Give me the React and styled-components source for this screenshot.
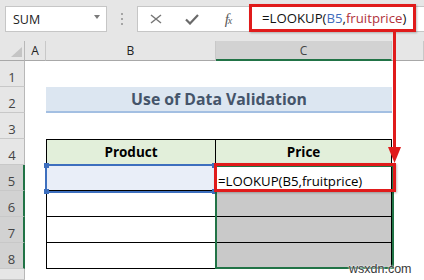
import React from 'react';
import styled, { createGlobalStyle } from 'styled-components';

const GlobalStyle = createGlobalStyle`
  html, body {
    margin: 0;
    padding: 0;
    background: #fff;
  }
  body {
    font-family: "Open Sans", "Liberation Sans", sans-serif;
  }
`;

const Screen = styled.div`
  position: relative;
  width: 424px;
  height: 280px;
  overflow: hidden;
  background: #fff;
`;

// ---- formula bar ----
const Toolbar = styled.div`
  display: flex;
  align-items: flex-start;
  height: 41px;
  box-sizing: border-box;
  padding: 6px 0 0 5px;
  background: #e6e6e6;
`;

const NameBox = styled.div`
  display: flex;
  align-items: center;
  justify-content: space-between;
  width: 102px;
  height: 26px;
  box-sizing: border-box;
  padding: 0 6px 0 7px;
  border: 1px solid #c6c6c6;
  background: #fff;
  font-size: 12.5px;
  color: #222;
`;

const Caret = styled.span`
  width: 0;
  height: 0;
  border-left: 3.5px solid transparent;
  border-right: 3.5px solid transparent;
  border-top: 4px solid #7a7a7a;
  margin-top: -5px;
`;

const Dots = styled.div`
  display: flex;
  flex-direction: column;
  align-items: center;
  justify-content: center;
  gap: 3px;
  width: 30px;
  height: 26px;

  span {
    width: 2px;
    height: 2px;
    background: #a5a5a5;
  }
`;

const FormulaBox = styled.div`
  flex: 1;
  display: flex;
  align-items: center;
  height: 26px;
  box-sizing: border-box;
  border: 1px solid #c6c6c6;
  border-right: none;
  background: #fff;
`;

const IconSlot = styled.div`
  display: flex;
  align-items: center;
  justify-content: center;
  width: 36px;
  height: 24px;
  color: ${p => p.$color || '#777'};
`;

const Fx = styled.span`
  font-family: "Liberation Serif", "DejaVu Serif", serif;
  font-style: italic;
  font-size: 15px;
  color: #5a5a5a;
  letter-spacing: -1px;

  small {
    font-size: 10px;
  }
`;

const FormulaInput = styled.div`
  display: flex;
  align-items: center;
  align-self: flex-start;
  width: 167px;
  height: 28px;
  margin: -3px 0 0 3px;
  box-sizing: border-box;
  padding-left: 10px;
  border: 3px solid #e01b1b;
  box-shadow: 1px 1px 2px rgba(0, 0, 0, 0.25);
  font-size: 13.2px;
  color: #111;
  white-space: nowrap;
`;

const Ref = styled.span`
  color: ${p => (p.$kind === 'cell' ? '#3f6cbc' : '#b1323b')};
`;

// ---- sheet ----
const Sheet = styled.div`
  display: grid;
  grid-template-columns: 25px 21px 170px 176px 1fr;
  grid-template-rows: 20px repeat(8, 26px) 1fr;
  height: 239px;
`;

const Corner = styled.div`
  position: relative;
  grid-row: 1;
  grid-column: 1;
  background: #e6e6e6;
  border-right: 1px solid #b8b8b8;
  border-bottom: 1px solid #a8a8a8;

  &::after {
    content: '';
    position: absolute;
    right: 2px;
    bottom: 3px;
    width: 0;
    height: 0;
    border-left: 11px solid transparent;
    border-bottom: 10px solid #c4c4c4;
  }
`;

const ColHead = styled.div`
  grid-row: 1;
  display: flex;
  align-items: center;
  justify-content: center;
  box-sizing: border-box;
  background: ${p => (p.$active ? '#d2d2d2' : '#e6e6e6')};
  border-right: 1px solid #c8c8c8;
  border-bottom: ${p => (p.$active ? '2px solid #217346' : '1px solid #a8a8a8')};
  font-size: 12px;
  color: ${p => (p.$active ? '#444' : '#222')};
`;

const RowHead = styled.div`
  grid-column: 1;
  grid-row: ${p => p.$row + 1};
  display: flex;
  align-items: flex-end;
  justify-content: center;
  box-sizing: border-box;
  background: ${p => (p.$active ? '#d2d2d2' : '#e6e6e6')};
  border-right: ${p => (p.$active ? '2px solid #217346' : '1px solid #b8b8b8')};
  border-bottom: 1px solid #c8c8c8;
  font-size: 13px;
  color: #444;
`;

const Title = styled.div`
  grid-column: 3 / 5;
  grid-row: 3;
  display: flex;
  align-items: center;
  justify-content: center;
  box-sizing: border-box;
  background: #dce6f1;
  border-bottom: 2px solid #a3bfe2;
  font-size: 15.8px;
  font-weight: 700;
  color: #44546a;
`;

const Table = styled.div`
  position: relative;
  grid-column: 3 / 5;
  grid-row: 5 / 10;
  display: grid;
  grid-template-columns: 169px 176px;
  grid-template-rows: 25px repeat(4, 26px);
  border-left: 1px solid #000;
  border-top: 1px solid #000;
`;

const TCell = styled.div`
  display: flex;
  align-items: ${p => (p.$head ? 'center' : 'flex-end')};
  justify-content: ${p => (p.$head ? 'center' : 'flex-start')};
  box-sizing: border-box;
  padding-left: ${p => (p.$head ? '0' : '2px')};
  background: ${p => p.$bg || '#fff'};
  border-right: 1px solid #000;
  border-bottom: 1px solid #000;
  font-size: ${p => (p.$head ? '13.5px' : '13.2px')};
  font-weight: ${p => (p.$head ? 700 : 400)};
  color: #000;
  white-space: nowrap;
`;

const RangeFrame = styled.div`
  position: absolute;
  left: ${p => p.$left}px;
  top: ${p => p.$top}px;
  width: ${p => p.$width}px;
  height: ${p => p.$height}px;
  box-sizing: border-box;
  border: 2px solid ${p => p.$color};
  pointer-events: none;
`;

const Handle = styled.span`
  position: absolute;
  width: 5px;
  height: 5px;
  background: #3d6fbe;
  left: ${p => p.$left}px;
  top: ${p => p.$top}px;
`;

const CalloutBox = styled.div`
  position: absolute;
  left: 167px;
  top: 23px;
  width: 182px;
  height: 29px;
  box-sizing: border-box;
  border: 3px solid #e01b1b;
  box-shadow: 1px 1px 2px rgba(0, 0, 0, 0.25);
`;

const Arrow = styled.svg`
  position: absolute;
  left: 387px;
  top: 32px;
`;

const Watermark = styled.div`
  position: absolute;
  left: 349px;
  top: 262px;
  font-family: "Liberation Sans", Arial, sans-serif;
  font-size: 12.5px;
  color: #3a3a3a;
  text-shadow: 0 0 2px #fff, 0 0 2px #fff;
`;

const rows = [1, 2, 3, 4, 5, 6, 7, 8, 9];

export default function App() {
  return (
    <Screen>
      <GlobalStyle />
      <Toolbar>
        <NameBox>
          SUM
          <Caret />
        </NameBox>
        <Dots>
          <span />
          <span />
          <span />
        </Dots>
        <FormulaBox>
          <IconSlot>
            <svg width="12" height="10" viewBox="0 0 12 10">
              <path d="M1 1 L11 9 M11 1 L1 9" stroke="currentColor" strokeWidth="1.5" fill="none" />
            </svg>
          </IconSlot>
          <IconSlot $color="#6a6a6a">
            <svg width="14" height="11" viewBox="0 0 14 11">
              <path d="M1 5.5 L5 9.5 L13 1" stroke="currentColor" strokeWidth="2.2" fill="none" />
            </svg>
          </IconSlot>
          <IconSlot>
            <Fx>f<small>x</small></Fx>
          </IconSlot>
          <FormulaInput>
            =LOOKUP(<Ref $kind="cell">B5</Ref>,<Ref $kind="name">fruitprice</Ref>)
          </FormulaInput>
        </FormulaBox>
      </Toolbar>

      <Sheet>
        <Corner />
        <ColHead>A</ColHead>
        <ColHead>B</ColHead>
        <ColHead $active>C</ColHead>
        <ColHead />

        {rows.map(r => (
          <RowHead key={r} $row={r} $active={r >= 5 && r <= 8}>
            {r < 9 ? r : ''}
          </RowHead>
        ))}

        <Title>Use of Data Validation</Title>

        <Table>
          <TCell $head $bg="#e2efda">Product</TCell>
          <TCell $head $bg="#e2efda">Price</TCell>
          <TCell $bg="#e9eef8" />
          <TCell>=LOOKUP(B5,fruitprice)</TCell>
          <TCell />
          <TCell $bg="#c9c9c9" />
          <TCell />
          <TCell $bg="#c9c9c9" />
          <TCell />
          <TCell $bg="#c9c9c9" />

          <RangeFrame $left={-2} $top={24} $width={172} $height={29} $color="#3d6fbe">
            <Handle $left={-3} $top={-3} />
            <Handle $left={-3} $top={23} />
            <Handle $left={165} $top={-3} />
            <Handle $left={165} $top={23} />
          </RangeFrame>
          <RangeFrame $left={168} $top={25} $width={179} $height={104} $color="#217346" />
          <CalloutBox />
        </Table>
      </Sheet>

      <Arrow width="16" height="132" viewBox="0 0 16 132">
        <path d="M7.5 0 L7.5 118" stroke="#e01b1b" strokeWidth="3" />
        <polygon points="1,115 14,115 7.5,131" fill="#e01b1b" />
      </Arrow>

      <Watermark>wsxdn.com</Watermark>
    </Screen>
  );
}
